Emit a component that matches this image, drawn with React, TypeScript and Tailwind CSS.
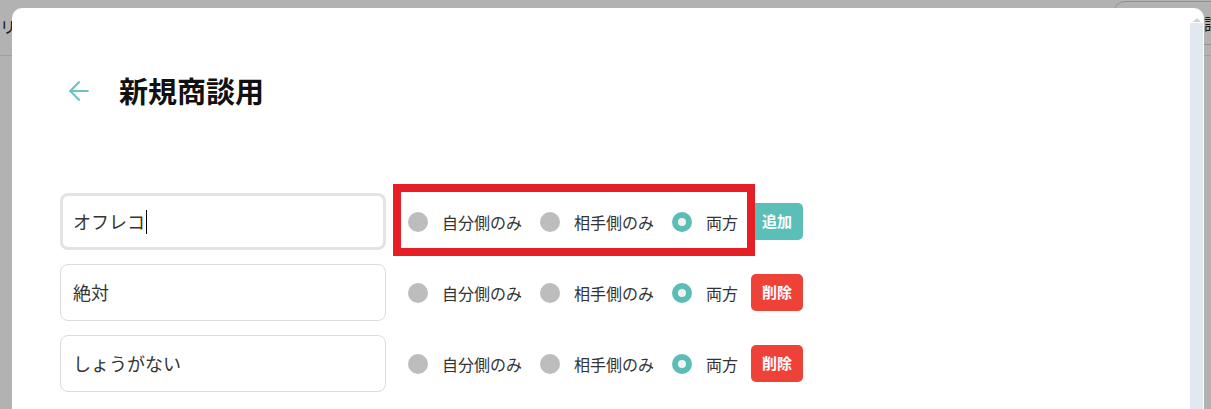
import { ArrowLeft } from 'lucide-react';

type Row = {
  word: string;
  action: 'add' | 'remove';
  focused?: boolean;
};

const rows: Row[] = [
  { word: 'オフレコ', action: 'add', focused: true },
  { word: '絶対', action: 'remove' },
  { word: 'しょうがない', action: 'remove' },
];

const options = ['自分側のみ', '相手側のみ', '両方'];

const font = { fontFamily: '"Noto Sans CJK JP", "Noto Sans", sans-serif' };

function Radio({ label, checked }: { label: string; checked: boolean }) {
  return (
    <label className="flex items-center">
      {checked ? (
        <span className="box-border w-5 h-5 rounded-full border-[6px] border-[#5bbdb6] bg-[#f3f3f3]" />
      ) : (
        <span className="w-5 h-5 rounded-full bg-[#bdbdbd]" />
      )}
      <span className="ml-[14px] text-base text-[#333]">{label}</span>
    </label>
  );
}

function WordRow({ row }: { row: Row }) {
  return (
    <div className="flex items-center">
      <div
        className={`box-border w-[326px] h-[57px] rounded-lg bg-white flex items-center text-[18px] text-[#333] ${
          row.focused ? 'border-[3px] border-[#e3e3e3] pl-[10px]' : 'border border-[#dcdcdc] pl-[12px]'
        }`}
      >
        <span>{row.word}</span>
        {row.focused && <span className="ml-[1px] w-px h-[24px] bg-black" />}
      </div>
      <div className="ml-[22px] flex items-center gap-[18px]">
        {options.map((opt, i) => (
          <Radio key={opt} label={opt} checked={i === 2} />
        ))}
      </div>
      <button
        className={`ml-[13px] h-[37px] w-[52px] rounded-[5px] text-white text-[15px] font-bold ${
          row.action === 'add' ? 'bg-[#5bbfb7]' : 'bg-[#ee4238]'
        }`}
      >
        {row.action === 'add' ? '追加' : '削除'}
      </button>
    </div>
  );
}

export default function App() {
  return (
    <div className="relative w-[1211px] h-[409px] overflow-hidden bg-white" style={font}>
      {/* page behind the modal */}
      <div className="h-[56px] border-b border-[#e5e5e5] flex items-start justify-between">
        <span className="mt-[14px] text-[16px] text-[#222]">リ</span>
        <div className="mt-px mr-[-40px] h-[44px] w-[138px] rounded-xl border border-[#cfcfcf] flex items-center pl-[90px] text-[16px] text-[#222]">
          詳細
        </div>
      </div>
      <div className="absolute inset-0 bg-black/30" />

      {/* modal */}
      <div className="absolute left-[12px] top-[8px] right-[7px] bottom-0 bg-white rounded-t-[10px] flex">
        <div className="flex-1 pl-[48px] pt-[57px]">
          <div className="h-[52px] flex items-center">
            <ArrowLeft size={30} strokeWidth={1.75} className="ml-[4px] text-[#6cc4bc]" />
            <h1 className="ml-[25px] text-[29px] font-bold text-[#111]">新規商談用</h1>
          </div>
          <div className="mt-[76px] flex flex-col gap-[14px]">
            {rows.map((r) => (
              <WordRow key={r.word} row={r} />
            ))}
          </div>
        </div>
        <div className="w-[13px] mr-px flex flex-col">
          <div className="h-[15px] flex items-end justify-center pb-[1px]">
            <span className="w-0 h-0 border-l-[4px] border-r-[4px] border-b-[4px] border-l-transparent border-r-transparent border-b-[#c8d0d8]" />
          </div>
          <div className="flex-1 bg-[#e2e8f0]" />
        </div>
      </div>

      {/* annotation */}
      <div className="absolute left-[393px] top-[184px] w-[362px] h-[72px] border-[8px] border-[#e61e25]" />
    </div>
  );
}
